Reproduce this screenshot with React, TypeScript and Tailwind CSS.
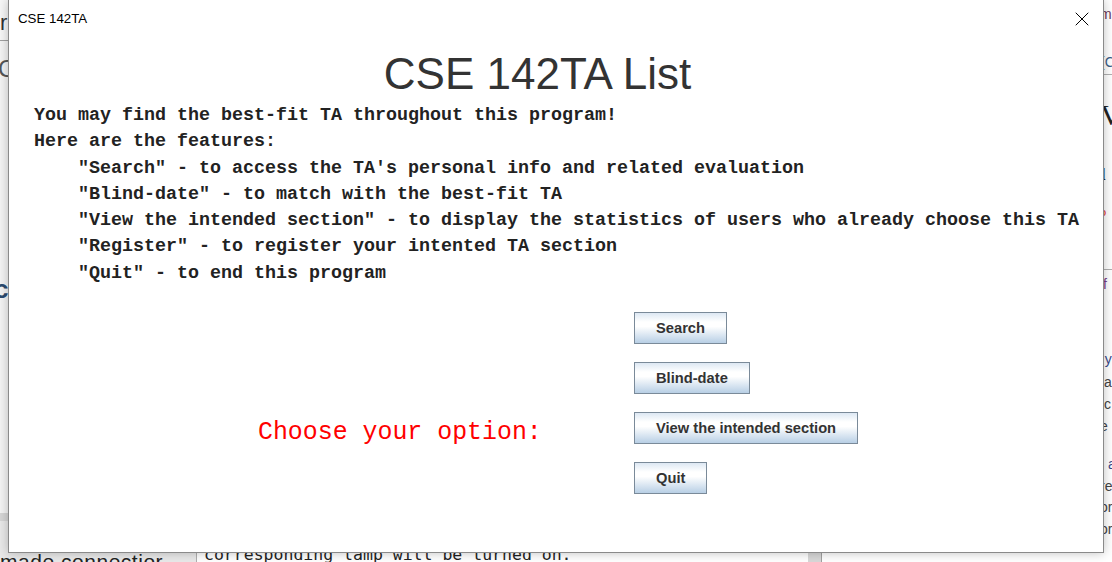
import { X } from "lucide-react";

const features = [
  '"Search" - to access the TA\'s personal info and related evaluation',
  '"Blind-date" - to match with the best-fit TA',
  '"View the intended section" - to display the statistics of users who already choose this TA',
  '"Register" - to register your intented TA section',
  '"Quit" - to end this program',
];

const buttons = ["Search", "Blind-date", "View the intended section", "Quit"];

// text fragments of the window peeking out at the right edge
const rightBits = [
  { t: "m", c: "text-[#6b3a5a]", m: "mt-[5px]" },
  { t: "(C", c: "text-[#3a5f8a]", m: "mt-[29px]" },
  { t: "", c: "h-px bg-[#b0b0b0] -ml-[4px]", m: "mt-[2px]" },
  { t: "V", c: "text-[30px] text-[#222] font-['Liberation_Serif',serif]", m: "mt-[30px]" },
  { t: "d", c: "text-[17px] font-bold text-[#222] font-['Liberation_Serif',serif] -ml-[4px]", m: "mt-[41px]" },
  { t: "o", c: "text-[11px] text-[#e02020]", m: "mt-[19px]" },
  { t: "", c: "h-px bg-[#b0b0b0] -ml-[4px]", m: "mt-[47px]" },
  { t: "if", c: "text-[#7a3e8a]", m: "mt-[5px]" },
  { t: "f y", c: "text-[#3a4a8a] -ml-[3px]", m: "mt-[56px]" },
  { t: "a", c: "text-[#444] ml-[4px]", m: "mt-[4px]" },
  { t: "c", c: "text-[#444] ml-[4px]", m: "mt-[3px]" },
  { t: "e", c: "text-[#444]", m: "mt-[3px]" },
  { t: "s a", c: "text-[#3a4a8a] -ml-[3px]", m: "mt-[19px]" },
  { t: "re", c: "text-[#444]", m: "mt-[3px]" },
  { t: "or", c: "text-[#444]", m: "mt-[2px]" },
  { t: "or", c: "text-[#444]", m: "mt-[3px]" },
];

function MetalButton({ label }: { label: string }) {
  return (
    <button className="h-[32px] px-[21px] border border-[#7a8a99] bg-[linear-gradient(to_bottom,#dde8f3_0%,#ffffff_30%,#ffffff_45%,#b8cfe5_100%)] text-[#333333] font-bold text-[14.7px] font-['Liberation_Sans',Arial,sans-serif] leading-none">
      {label}
    </button>
  );
}

function Desktop() {
  return (
    <div className="absolute inset-0 flex overflow-hidden bg-[#f4f4f4] font-['Liberation_Sans',Arial,sans-serif]">
      {/* left window */}
      <div className="w-[197px] shrink-0 flex flex-col border-r border-[#b0b0b0]">
        <div className="h-[41px] shrink-0 border-b border-[#a0a0a0] bg-[#f7f7f7] pt-[10px] text-[22px] leading-[26px] text-[#333]">
          r
        </div>
        <div className="mt-[15px] -ml-[2px] text-[24px] leading-[26px] text-[#555]">C</div>
        <div className="mt-[192px] -ml-[6px] text-[26px] leading-[30px] font-bold text-[#2c4a6e]">co</div>
        <div className="mt-[209px] h-[8px] shrink-0 bg-[#d6d6d6]" />
        <div className="flex-1 bg-[#e9e9e9] pt-[29px] text-[21px] leading-[24px] text-[#222] tracking-wide whitespace-nowrap">
          made connectior
        </div>
      </div>

      {/* middle editor */}
      <div className="w-[625px] shrink-0 flex bg-white">
        <div className="flex-1 flex flex-col justify-end pl-[7px]">
          <div className="text-[16.5px] leading-[20px] -mb-[3px] text-[#222] font-['DejaVu_Sans_Mono',monospace] whitespace-nowrap">
            corresponding lamp will be turned on.
          </div>
        </div>
        <div className="w-[14px] bg-[#d8d8d8] border-r border-[#a0a0a0]" />
      </div>

      {/* right window */}
      <div className="flex-1 flex flex-col bg-white pl-[278px] text-[14px] whitespace-nowrap">
        {rightBits.map((b, i) => (
          <div key={i} className={`${b.m} ${b.t ? "h-[19px] leading-[19px]" : ""} ${b.c}`}>
            {b.t}
          </div>
        ))}
      </div>
    </div>
  );
}

export default function App() {
  return (
    <div className="relative w-[1112px] h-[562px] overflow-hidden">
      <Desktop />

      <div className="absolute left-[8px] top-0 w-[1096px] h-[553px] bg-white border border-t-0 border-[#8a8a8a] shadow-[0_0_10px_rgba(0,0,0,0.25)] flex flex-col">
        {/* title bar */}
        <div className="h-[38px] shrink-0 flex items-center justify-between pl-[9px] pr-[9px]">
          <span className="text-[13.3px] text-black font-['Liberation_Sans',Arial,sans-serif]">
            CSE 142TA
          </span>
          <X size={24} strokeWidth={1} className="text-black" />
        </div>

        <div className="flex flex-col pl-[25px]">
          <h1 className="mt-[15px] text-center pr-[62px] text-[44px] leading-[42px] text-[#333333] font-['Liberation_Sans',Arial,sans-serif]">
            CSE 142TA List
          </h1>

          <div className="mt-[8px] font-['Liberation_Mono','Courier_New',monospace] font-bold text-[18.33px] leading-[26.3px] text-[#222] whitespace-pre">
            <div>You may find the best-fit TA throughout this program!</div>
            <div>Here are the features:</div>
            {features.map((f) => (
              <div key={f}>{"    " + f}</div>
            ))}
          </div>

          <div className="mt-[25px] flex items-start">
            <div className="ml-[224px] w-[376px] mt-[105px] text-[24.9px] leading-[30px] text-[#ff0000] font-['Liberation_Mono','Courier_New',monospace] whitespace-pre">
              Choose your option:
            </div>
            <div className="flex flex-col items-start gap-[18px]">
              {buttons.map((b) => (
                <MetalButton key={b} label={b} />
              ))}
            </div>
          </div>
        </div>
      </div>
    </div>
  );
}
